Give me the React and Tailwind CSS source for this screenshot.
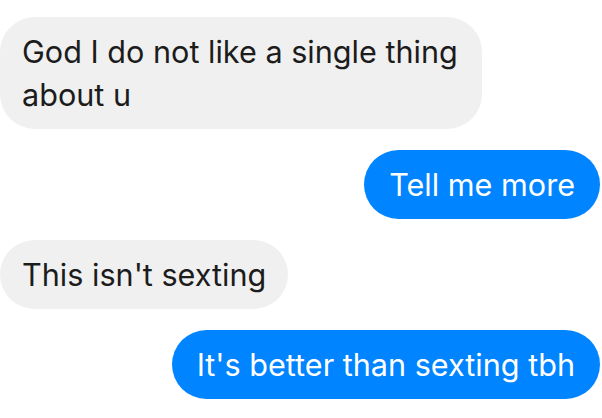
import React from "react";

const messages = [
  { from: "them", text: "God I do not like a single thing about u" },
  { from: "me", text: "Tell me more" },
  { from: "them", text: "This isn't sexting" },
  { from: "me", text: "It's better than sexting tbh" },
];

export default function App() {
  return (
    <div className="w-[602px] h-[418px] bg-white overflow-hidden flex flex-col gap-[21px] pt-[17px] pr-[2px] font-['Inter',sans-serif]">
      {messages.map((m, i) => (
        <div key={i} className={m.from === "me" ? "flex justify-end" : "flex justify-start"}>
          <div
            className={
              m.from === "me"
                ? "bg-[#0084ff] text-white rounded-[35px] px-[25px] py-[13px] text-[30.6px] leading-[43px] max-w-[482px]"
                : "bg-[#f0f0f0] text-[#1c1c1c] rounded-[35px] px-[22px] py-[13px] text-[30.6px] leading-[43px] max-w-[482px]"
            }
          >
            {m.text}
          </div>
        </div>
      ))}
    </div>
  );
}
